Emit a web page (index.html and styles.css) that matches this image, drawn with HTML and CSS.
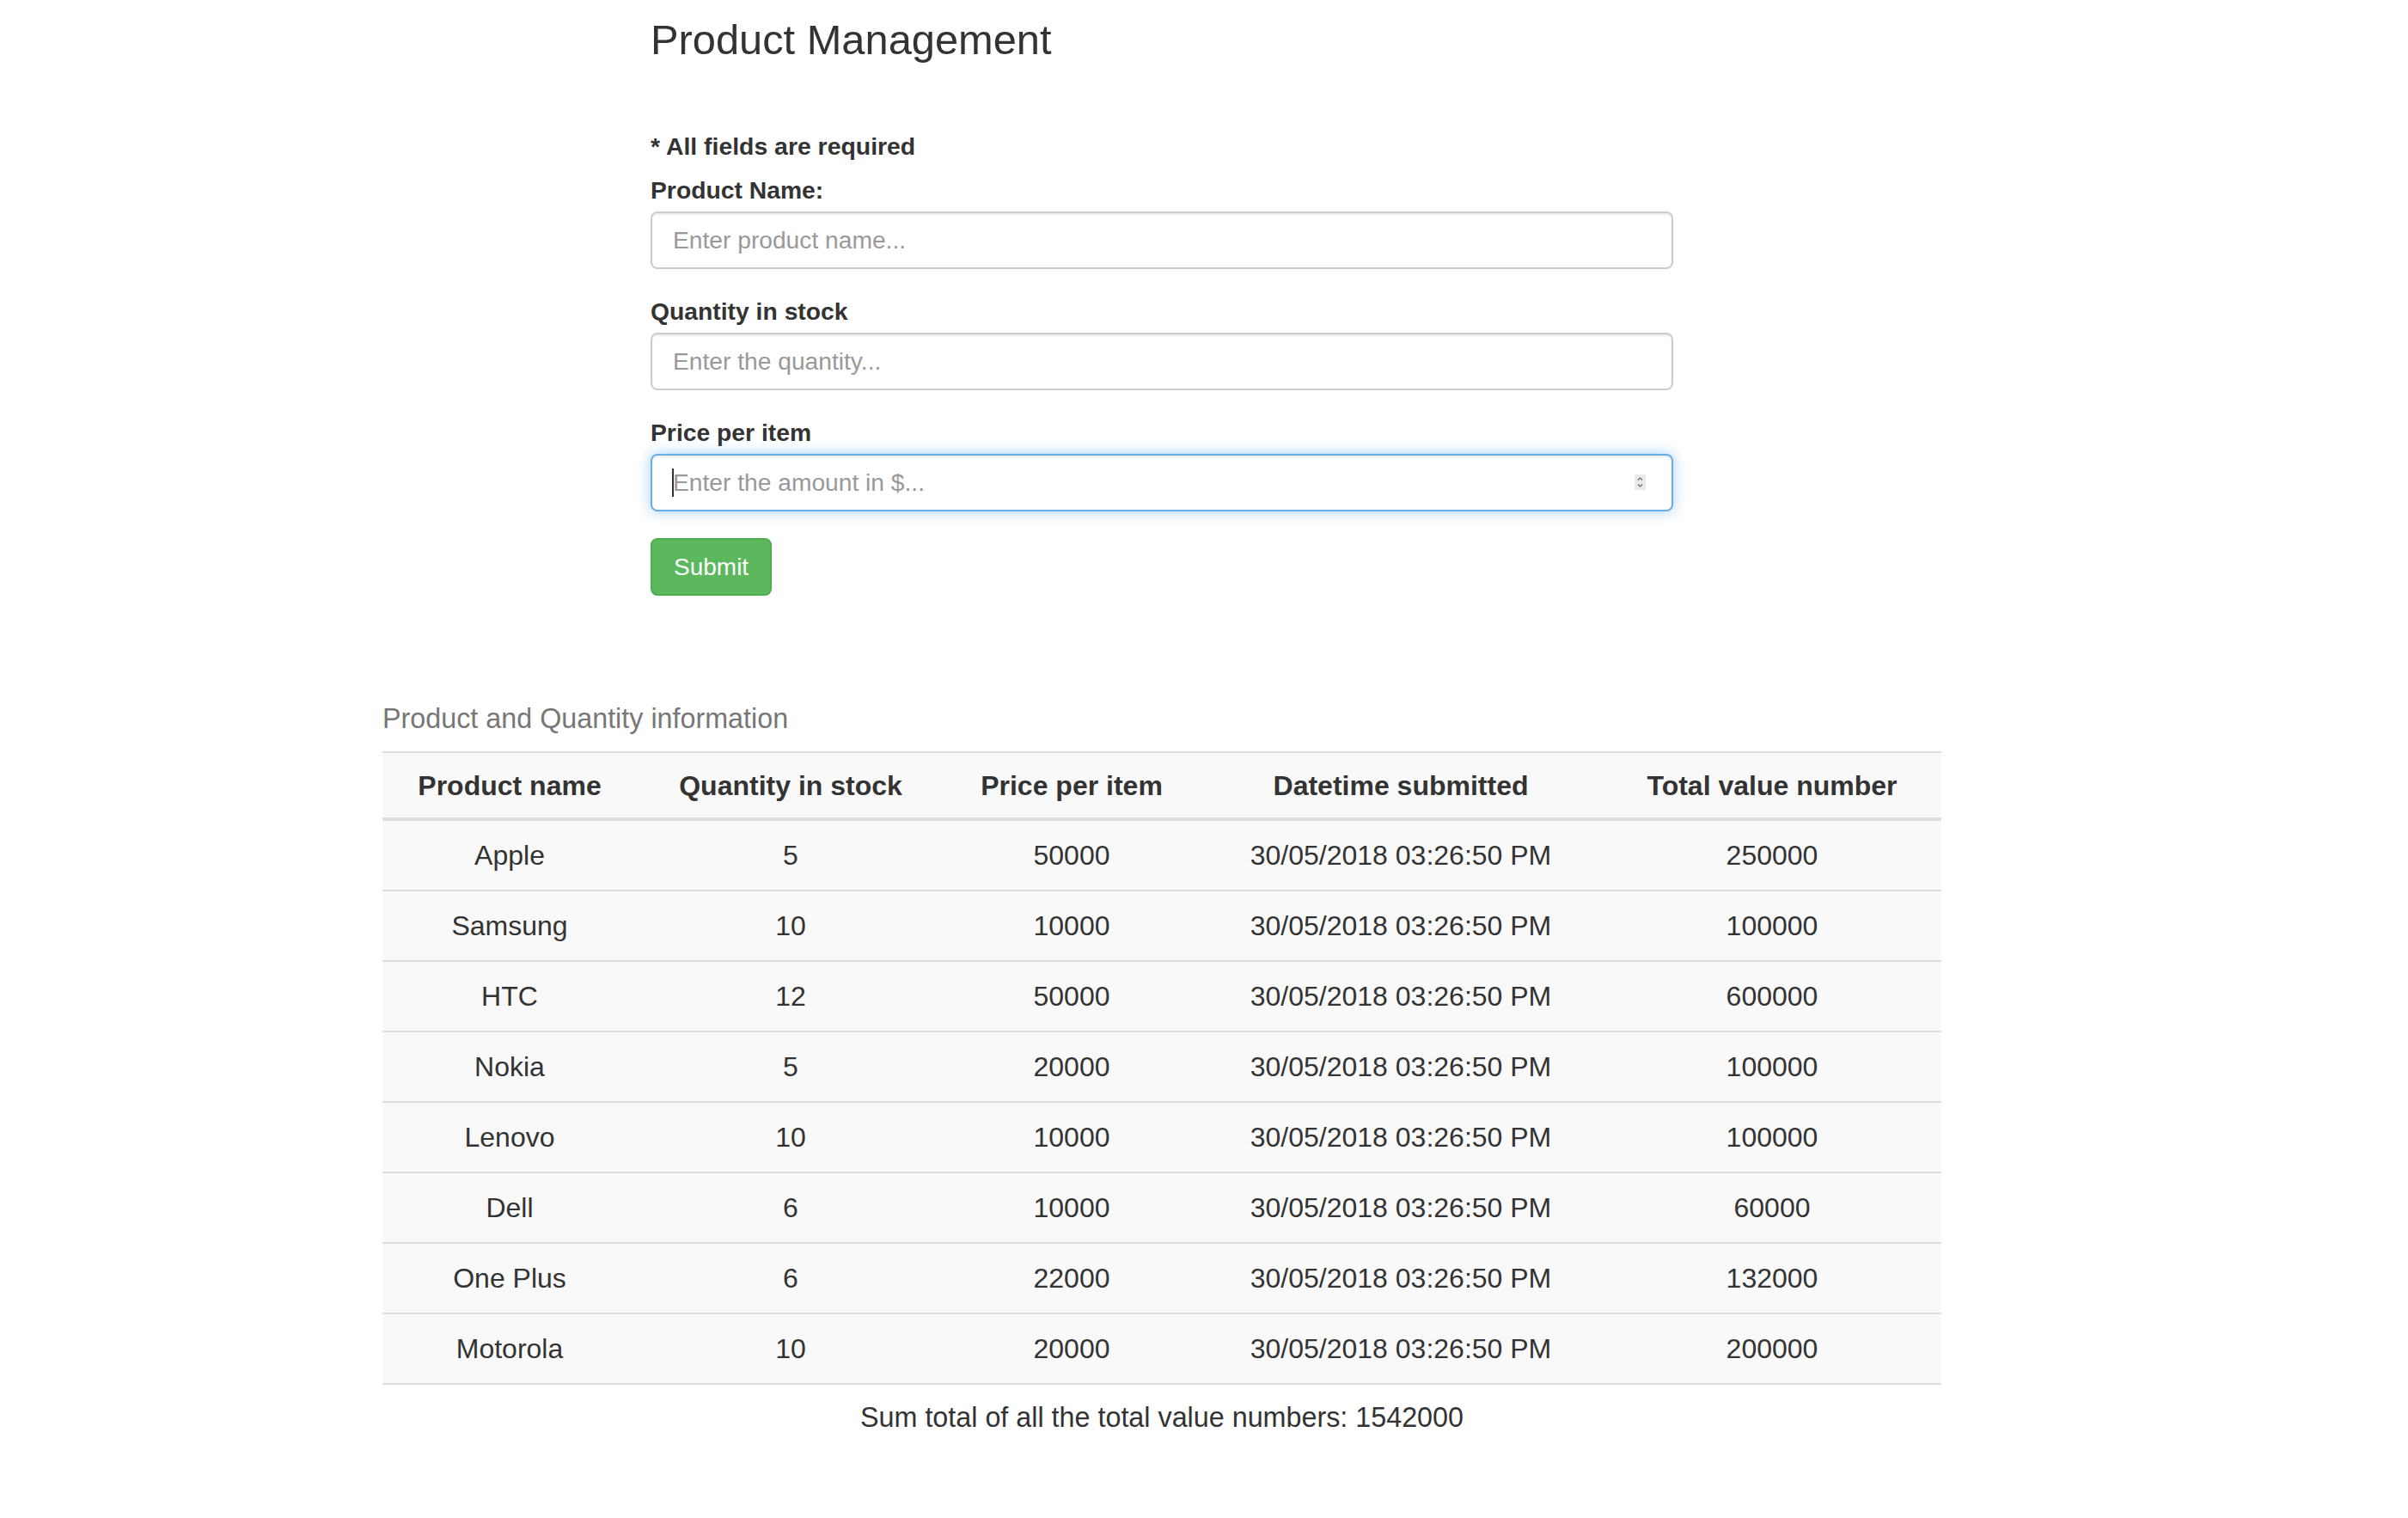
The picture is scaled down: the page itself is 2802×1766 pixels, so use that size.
FILE: index.html
```
<!DOCTYPE html>
<html lang="en">
<head>
<meta charset="utf-8">
<title>Product Management</title>
<link rel="stylesheet" href="styles.css">
</head>
<body>
<div class="page">
  <div class="form-col">
    <h3 class="title">Product Management</h3>
    <p class="required">* All fields are required</p>
    <div class="group">
      <label class="label">Product Name:</label>
      <input class="field" type="text" placeholder="Enter product name...">
    </div>
    <div class="group">
      <label class="label">Quantity in stock</label>
      <input class="field" type="text" placeholder="Enter the quantity...">
    </div>
    <div class="group last">
      <label class="label">Price per item</label>
      <div class="field-wrap">
        <input class="field focused" type="text" placeholder="Enter the amount in $...">
        <span class="caret"></span>
        <span class="spinner">
          <svg width="13" height="18" viewBox="0 0 13 18">
            <rect x="0" y="0" width="13" height="18" fill="#e9e9e9"/>
            <path d="M4 6.5 L6.5 4 L9 6.5" fill="none" stroke="#6a6a6a" stroke-width="1.2"/>
            <path d="M4 11.5 L6.5 14 L9 11.5" fill="none" stroke="#6a6a6a" stroke-width="1.2"/>
          </svg>
        </span>
      </div>
    </div>
    <button class="btn" type="button">Submit</button>
  </div>

  <table class="products">
    <caption>Product and Quantity information</caption>
    <colgroup>
      <col class="c1"><col class="c2"><col class="c3"><col class="c4"><col class="c5">
    </colgroup>
    <thead>
      <tr><th>Product name</th><th>Quantity in stock</th><th>Price per item</th><th>Datetime submitted</th><th>Total value number</th></tr>
    </thead>
    <tbody>
      <tr><td>Apple</td><td>5</td><td>50000</td><td>30/05/2018 03:26:50 PM</td><td>250000</td></tr>
      <tr><td>Samsung</td><td>10</td><td>10000</td><td>30/05/2018 03:26:50 PM</td><td>100000</td></tr>
      <tr><td>HTC</td><td>12</td><td>50000</td><td>30/05/2018 03:26:50 PM</td><td>600000</td></tr>
      <tr><td>Nokia</td><td>5</td><td>20000</td><td>30/05/2018 03:26:50 PM</td><td>100000</td></tr>
      <tr><td>Lenovo</td><td>10</td><td>10000</td><td>30/05/2018 03:26:50 PM</td><td>100000</td></tr>
      <tr><td>Dell</td><td>6</td><td>10000</td><td>30/05/2018 03:26:50 PM</td><td>60000</td></tr>
      <tr><td>One Plus</td><td>6</td><td>22000</td><td>30/05/2018 03:26:50 PM</td><td>132000</td></tr>
      <tr><td>Motorola</td><td>10</td><td>20000</td><td>30/05/2018 03:26:50 PM</td><td>200000</td></tr>
    </tbody>
  </table>
  <div class="sum">Sum total of all the total value numbers: 1542000</div>
</div>
</body>
</html>
```
FILE: styles.css
```
* { box-sizing: border-box; }
html, body {
  margin: 0;
  padding: 0;
  background: #fff;
}
body {
  font-family: "Liberation Sans", Arial, Helvetica, sans-serif;
  font-size: 28px;
  line-height: 40px;
  color: #333;
}
.page {
  margin-left: 445px;
  width: 1814px;
}
.form-col {
  margin-left: 312px;
  width: 1190px;
}
.title {
  margin: 20px 0 0;
  font-size: 48.8px;
  font-weight: 500;
  line-height: 53px;
  color: #333;
}
.required {
  margin: 77px 0 0;
  font-size: 28.4px;
  font-weight: bold;
  line-height: 40px;
}
.group {
  margin-top: 11px;
  margin-bottom: 29px;
}
.group + .group { margin-top: 0; }
.group.last { margin-bottom: 31px; }
.label {
  display: block;
  font-size: 28.3px;
  font-weight: bold;
  line-height: 40px;
  margin-bottom: 5px;
}
.field-wrap {
  position: relative;
}
.field {
  display: block;
  width: 100%;
  height: 67px;
  padding: 0 24px;
  font-family: inherit;
  font-size: 28.2px;
  color: #555;
  background: #fff;
  border: 2px solid #ccc;
  border-radius: 8px;
  box-shadow: inset 0 2px 2px rgba(0,0,0,.075);
  outline: none;
}
.field::placeholder { color: #999; opacity: 1; }
.field.focused {
  border-color: #66afe9;
  box-shadow: inset 0 2px 2px rgba(0,0,0,.075), 0 0 16px rgba(102,175,233,.6);
}
.caret {
  position: absolute;
  left: 25px;
  top: 17px;
  width: 2px;
  height: 33px;
  background: #333;
}
.spinner {
  position: absolute;
  right: 32px;
  top: 24px;
  width: 13px;
  height: 18px;
  display: block;
  line-height: 0;
}
.btn {
  display: block;
  height: 67px;
  padding: 0 25px;
  font-family: inherit;
  font-size: 28px;
  color: #fff;
  background: #5cb85c;
  border: 2px solid #4cae4c;
  border-radius: 8px;
  cursor: pointer;
}
.products {
  margin-top: 103px;
  width: 1814px;
  border-collapse: collapse;
  table-layout: fixed;
  font-size: 32px;
  line-height: 46px;
}
.products caption {
  caption-side: top;
  text-align: left;
  color: #777;
  padding: 17px 0 15px;
  font-size: 32.3px;
}
.c1 { width: 296px; }
.c2 { width: 358px; }
.c3 { width: 296px; }
.c4 { width: 470px; }
.c5 { width: 394px; }
.products th,
.products td {
  text-align: center;
  background: #f9f9f9;
  white-space: nowrap;
}
.products th {
  font-weight: bold;
  padding: 15px 8px 14px;
  border-top: 2px solid #ddd;
  border-bottom: 4px solid #ddd;
}
.products td {
  padding: 17px 8px;
  border-bottom: 2px solid #ddd;
}
.sum {
  margin-top: 15px;
  text-align: center;
  font-size: 32.3px;
  line-height: 46px;
}
```
